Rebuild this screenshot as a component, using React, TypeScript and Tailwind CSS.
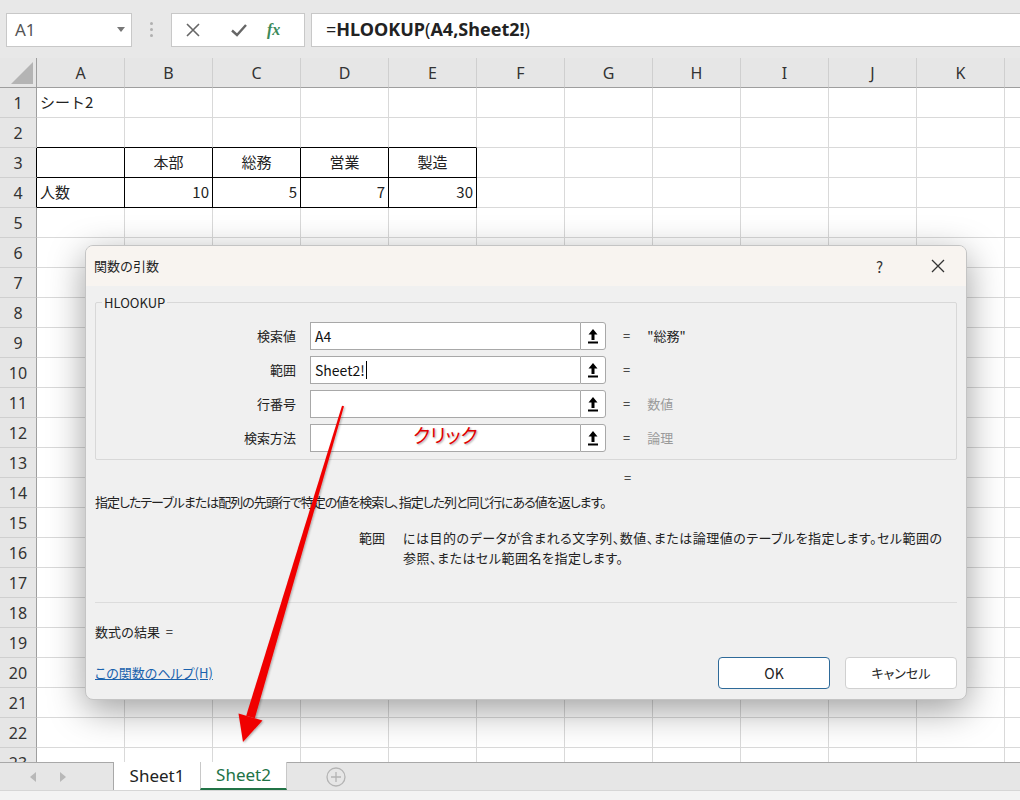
import React from 'react';

const COLS = ['A', 'B', 'C', 'D', 'E', 'F', 'G', 'H', 'I', 'J', 'K', 'L'];
const ROWS = Array.from({ length: 23 }, (_, i) => i + 1);

type Cell = { text: string; align?: 'left' | 'center' | 'right' };

const DATA: Record<string, Cell> = {
  A1: { text: 'シート2' },
  B3: { text: '本部', align: 'center' },
  C3: { text: '総務', align: 'center' },
  D3: { text: '営業', align: 'center' },
  E3: { text: '製造', align: 'center' },
  A4: { text: '人数' },
  B4: { text: '10', align: 'right' },
  C4: { text: '5', align: 'right' },
  D4: { text: '7', align: 'right' },
  E4: { text: '30', align: 'right' },
};

const inTable = (r: number, c: number) => (r === 3 || r === 4) && c <= 4;

const RefButton = () => (
  <div className="w-[26px] h-[28px] bg-white border border-[#a8a8a8] rounded-r-[3px] flex items-center justify-center">
    <svg width="12" height="16" viewBox="0 0 12 16">
      <path d="M6 1 L10.5 6.5 L7.5 6.5 L7.5 12 L4.5 12 L4.5 6.5 L1.5 6.5 Z" fill="#000" />
      <rect x="1" y="13.5" width="10" height="2" fill="#000" />
    </svg>
  </div>
);

const Field = ({ label, value, result, muted, caret }: { label: string; value?: string; result?: string; muted?: boolean; caret?: boolean }) => (
  <div className="flex items-center h-[28px]">
    <div className="w-[200px] text-right text-[13px] text-[#222]">{label}</div>
    <div className="ml-[14px] w-[270px] h-[28px] bg-white border border-r-0 border-[#a8a8a8] flex items-center px-[4px] text-[14px] text-[#111]">
      {value}
      {caret && <span className="inline-block w-px h-[18px] bg-black ml-px" />}
    </div>
    <RefButton />
    <div className="ml-[17px] text-[13px] text-[#222]">=</div>
    <div className={`ml-[17px] text-[13px] ${muted ? 'text-[#9a9a9a]' : 'text-[#222]'}`}>{result}</div>
  </div>
);

export default function App() {
  return (
    <div className="relative w-[1020px] h-[800px] overflow-hidden bg-white font-['Noto_Sans_CJK_JP','Noto_Sans',sans-serif] text-[#222]">
      {/* formula bar */}
      <div className="h-[58px] bg-[#e8e8e8] flex items-center pl-[6px] pt-[1px]">
        <div className="w-[126px] h-[34px] bg-white border border-[#c8c8c8] flex items-center justify-between pl-[8px] pr-[6px]">
          <span className="text-[17px] text-[#555] font-['Noto_Sans',sans-serif]">A1</span>
          <svg width="8" height="5" viewBox="0 0 8 5"><path d="M0 0 L8 0 L4 5 Z" fill="#777" /></svg>
        </div>
        <div className="w-[39px] flex flex-col items-center gap-[3px]">
          <span className="w-[3px] h-[3px] bg-[#b0b0b0] rounded-full" />
          <span className="w-[3px] h-[3px] bg-[#b0b0b0] rounded-full" />
          <span className="w-[3px] h-[3px] bg-[#b0b0b0] rounded-full" />
        </div>
        <div className="w-[134px] h-[34px] bg-white border border-[#c8c8c8] flex items-center pl-[13px]">
          <svg width="16" height="16" viewBox="0 0 16 16"><path d="M2 2 L14 14 M14 2 L2 14" stroke="#666" strokeWidth="1.6" /></svg>
          <svg className="ml-[29px]" width="18" height="16" viewBox="0 0 18 16"><path d="M2 8.5 L7 13 L16 3" stroke="#666" strokeWidth="2.4" fill="none" /></svg>
          <span className="ml-[19px] text-[16px] italic text-[#3c8a5a] font-['Liberation_Serif',serif] font-bold">fx</span>
        </div>
        <div className="ml-[6px] flex-1 h-[34px] bg-white border border-r-0 border-[#c8c8c8] flex items-center pl-[14px] text-[18px] text-[#222] font-['Noto_Sans','Noto_Sans_CJK_JP',sans-serif]">
          <span>=</span><span className="font-bold">HLOOKUP</span><span>(</span><span className="font-bold">A4,Sheet2!</span><span>)</span>
        </div>
      </div>

      {/* grid */}
      <div className="h-[704px] overflow-hidden">
        <div className="grid grid-cols-[37px_repeat(12,88px)] auto-rows-[30px] w-[1093px]">
          <div className="bg-[#e6e6e6] border-r border-b border-[#9e9e9e] relative">
            <svg className="absolute right-[3px] bottom-[3px]" width="22" height="22" viewBox="0 0 22 22"><path d="M22 0 L22 22 L0 22 Z" fill="#b4b4b4" /></svg>
          </div>
          {COLS.map((c) => (
            <div key={c} className="bg-[#e6e6e6] border-r border-[#cfcfcf] border-b-[1.5px] border-b-[#9e9e9e] flex items-center justify-center text-[16px] text-[#333] font-['Noto_Sans',sans-serif]">
              {c === 'L' ? '' : c}
            </div>
          ))}
          {ROWS.map((r) => (
            <React.Fragment key={r}>
              <div className={`bg-[#e6e6e6] border-b border-[#cfcfcf] border-r ${r === 3 || r === 4 ? 'border-r-black' : 'border-r-[#9e9e9e]'} flex items-center justify-center text-[16px] text-[#333] font-['Noto_Sans',sans-serif]`}>
                {r}
              </div>
              {COLS.map((c, ci) => {
                const cell = DATA[`${c}${r}`];
                const t = inTable(r, ci);
                const bottomBlack = t || (r === 2 && ci <= 4);
                const align = cell?.align === 'right' ? 'justify-end' : cell?.align === 'center' ? 'justify-center' : 'justify-start';
                return (
                  <div
                    key={c}
                    className={`border-r border-b flex items-center px-[3px] text-[15px] text-[#222] ${align} ${t ? 'border-r-black' : 'border-r-[#d9d9d9]'} ${bottomBlack ? 'border-b-black' : 'border-b-[#d9d9d9]'}`}
                  >
                    {cell?.text}
                  </div>
                );
              })}
            </React.Fragment>
          ))}
        </div>
      </div>

      {/* sheet tabs */}
      <div className="h-[28px] bg-[#e6e6e6] border-t border-[#a8a8a8] flex items-stretch">
        <div className="w-[113px] flex items-center pl-[30px] gap-[24px]">
          <svg width="6" height="10" viewBox="0 0 6 10"><path d="M6 0 L6 10 L0 5 Z" fill="#b8b8b8" /></svg>
          <svg width="6" height="10" viewBox="0 0 6 10"><path d="M0 0 L0 10 L6 5 Z" fill="#b8b8b8" /></svg>
        </div>
        <div className="w-[87px] bg-white border-l border-[#a8a8a8] -mt-px flex items-center justify-center text-[17px] text-[#222] font-['Noto_Sans',sans-serif]">Sheet1</div>
        <div className="w-[87px] bg-white border-l border-r border-[#c8c8c8] border-b-2 border-b-[#217346] -mt-px flex items-center justify-center text-[17px] text-[#217346] font-['Noto_Sans',sans-serif]">Sheet2</div>
        <div className="ml-[39px] flex items-center">
          <svg width="20" height="20" viewBox="0 0 20 20"><circle cx="10" cy="10" r="9" fill="none" stroke="#b4b4b4" strokeWidth="1.3" /><path d="M10 5 V15 M5 10 H15" stroke="#b4b4b4" strokeWidth="1.3" /></svg>
        </div>
      </div>
      <div className="h-[10px] bg-[#f3f3f3] border-t border-[#d6d6d6]" />

      {/* dialog */}
      <div className="absolute left-[85px] top-[245px] w-[882px] rounded-[8px] bg-[#f0f0f0] border border-[#c4c4c4] shadow-[0_10px_36px_rgba(0,0,0,0.38)] overflow-hidden">
        <div className="h-[40px] bg-[#f8f4f0] flex items-center pl-[8px] relative">
          <span className="text-[13px] text-[#222]">関数の引数</span>
          <span className="absolute left-[790px] top-[10px] text-[15px] text-[#333]">?</span>
          <svg className="absolute left-[845px] top-[13px]" width="14" height="14" viewBox="0 0 14 14"><path d="M1 1 L13 13 M13 1 L1 13" stroke="#333" strokeWidth="1.3" /></svg>
        </div>
        <div className="px-[9px] pb-[10px]">
          <div className="mt-[16px] h-[158px] border border-[#d8d8d8] rounded-[2px] relative pt-[19px] flex flex-col gap-[6px]">
            <span className="absolute left-[6px] -top-[10px] bg-[#f0f0f0] px-[2px] text-[13px] text-[#222]">HLOOKUP</span>
            <Field label="検索値" value="A4" result={'"総務"'} />
            <Field label="範囲" value="Sheet2!" caret />
            <Field label="行番号" result="数値" muted />
            <Field label="検索方法" result="論理" muted />
          </div>
          <div className="mt-[10px] h-[16px] pl-[529px] text-[13px] leading-[16px]">=</div>
          <div className="mt-[8px] h-[16px] text-[13px] leading-[16px] whitespace-nowrap [font-feature-settings:'palt'] tracking-[-1px]">
            指定したテーブルまたは配列の先頭行で特定の値を検索し、指定した列と同じ行にある値を返します。
          </div>
          <div className="mt-[18px] flex text-[13px] leading-[20px] pl-[264px]">
            <div className="w-[44px] shrink-0">範囲</div>
            <div className="whitespace-nowrap [font-feature-settings:'palt'] tracking-[0.5px]">
              <div>には目的のデータが含まれる文字列、数値、または論理値のテーブルを指定します。セル範囲の</div>
              <div>参照、またはセル範囲名を指定します。</div>
            </div>
          </div>
          <div className="mt-[34px] border-t border-[#dcdcdc]" />
          <div className="mt-[19px] h-[20px] text-[13px] leading-[20px]">数式の結果&nbsp;&nbsp;=</div>
          <div className="mt-[15px] flex items-center justify-between">
            <span className="text-[13px] text-[#1a62ad] underline [font-feature-settings:'palt']">この関数のヘルプ(H)</span>
            <div className="flex gap-[15px]">
              <button className="w-[112px] h-[32px] bg-white border border-[#2e6a99] rounded-[4px] text-[14px] text-[#222]">OK</button>
              <button className="w-[112px] h-[32px] bg-white border border-[#d0d0d0] rounded-[4px] text-[13px] text-[#222] [font-feature-settings:'palt']">キャンセル</button>
            </div>
          </div>
        </div>
      </div>

      {/* annotation */}
      <span className="absolute left-[413px] top-[421px] text-[19px] font-normal text-[#e00000] [text-shadow:1px_1px_2px_rgba(0,0,0,0.35)] [font-feature-settings:'palt']">クリック</span>
      <svg className="absolute left-0 top-0 pointer-events-none" width="1020" height="800" viewBox="0 0 1020 800">
        <defs>
          <filter id="sh" x="-20%" y="-20%" width="140%" height="140%">
            <feDropShadow dx="1" dy="1" stdDeviation="1" floodColor="#000" floodOpacity="0.3" />
          </filter>
        </defs>
        <g filter="url(#sh)" fill="#f00000">
          <path d="M342 405.7 L344 406.3 L254.8 718.3 L246.2 715.7 Z" />
          <path d="M238.5 713.5 L262.5 720.5 L243 742 Z" />
        </g>
      </svg>
    </div>
  );
}
